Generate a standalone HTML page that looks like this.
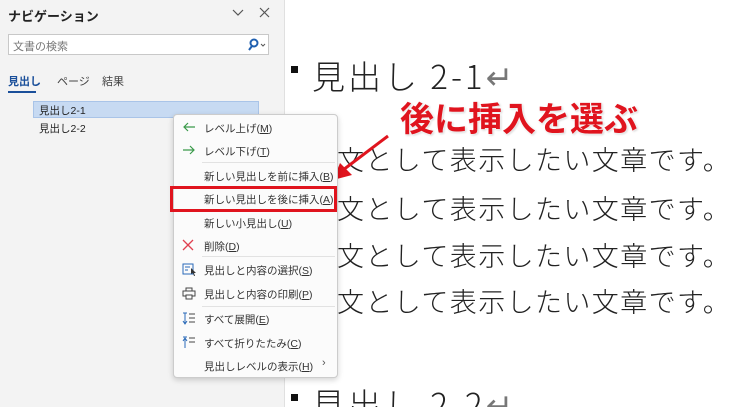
<!DOCTYPE html>
<html><head><meta charset="utf-8"><style>
*{margin:0;padding:0;box-sizing:border-box}
html,body{width:740px;height:407px;overflow:hidden}
body{background:#fff;position:relative;font-family:"Liberation Sans","Noto Sans CJK JP",sans-serif;color:#222}
.nav{position:absolute;left:0;top:0;width:285px;height:407px;background:#f3f3f3;border-right:1px solid #e0e0e0}
.a{position:absolute;white-space:nowrap}
.doc{font-family:"Noto Sans CJK JP",sans-serif;font-weight:300;font-size:27px;color:#222;letter-spacing:1.4px}
.menu{position:absolute;left:173px;top:114px;width:165px;height:264px;background:#fbfbfb;border:1px solid #ccc;border-radius:4px;box-shadow:0 2px 6px rgba(0,0,0,.18);font-size:10.5px;color:#333}
.mi{position:absolute;left:30px;white-space:nowrap}
.sep{position:absolute;left:28px;right:2px;height:1px;background:#e2e2e2}
.ic{position:absolute;left:8px}
u{text-decoration:underline}
</style></head><body>
<div class="nav">
  <div class="a" style="left:8px;top:6px;font-size:13px;font-weight:bold">ナビゲーション</div>
  <svg class="a" style="left:232px;top:9px" width="12" height="8"><path d="M1 1l5 5 5-5" stroke="#555" fill="none" stroke-width="1.2"/></svg>
  <svg class="a" style="left:259px;top:7px" width="11" height="11"><path d="M1 1l9 9M10 1l-9 9" stroke="#555" stroke-width="1.2"/></svg>
  <div class="a" style="left:8px;top:34px;width:261px;height:21px;background:#fff;border:1px solid #c8c8c8"></div>
  <div class="a" style="left:13px;top:38px;font-size:11px;color:#777">文書の検索</div>
  <svg class="a" style="left:247px;top:38px" width="20" height="13"><circle cx="7" cy="5" r="3.5" stroke="#1f5fb0" stroke-width="2" fill="none"/><path d="M5 8l-3 4" stroke="#1f5fb0" stroke-width="2"/><path d="M14 6l2 2 2-2" stroke="#555" fill="none"/></svg>
  <div class="a" style="left:8px;top:73px;font-size:11px;font-weight:bold;color:#1a4f9a">見出し</div>
  <div class="a" style="left:8px;top:91px;width:28px;height:2px;background:#1a4f9a"></div>
  <div class="a" style="left:57px;top:73px;font-size:11px;color:#444">ページ</div>
  <div class="a" style="left:102px;top:73px;font-size:11px;color:#444">結果</div>
  <div class="a" style="left:33px;top:101px;width:226px;height:17px;background:#c7daf2;border:1px solid #a9c4e8"></div>
  <div class="a" style="left:39px;top:103px;font-size:10.5px">見出し2-1</div>
  <div class="a" style="left:39px;top:121px;font-size:10.5px">見出し2-2</div>
</div>
<div class="a" style="left:291px;top:66px;width:7px;height:7px;background:#111"></div>
<div class="a doc" style="left:312px;top:51px;font-size:33px;letter-spacing:3px">見出し 2-1<span style="color:#777">↵</span></div>
<div class="a doc" style="left:337px;top:139px">文として表示したい文章です。</div>
<div class="a doc" style="left:337px;top:188px">文として表示したい文章です。</div>
<div class="a doc" style="left:337px;top:235px">文として表示したい文章です。</div>
<div class="a doc" style="left:337px;top:281px">文として表示したい文章です。</div>
<div class="a" style="left:291px;top:394px;width:7px;height:7px;background:#111"></div>
<div class="a doc" style="left:312px;top:379px;font-size:33px;letter-spacing:3px">見出し 2-2<span style="color:#777">↵</span></div>
<div class="a" style="left:400px;top:92px;font-size:34px;font-weight:bold;color:#e0141e;text-shadow:0 0 2px #fff,0 0 3px #fff,1px 1px 2px #bbb">後に挿入を選ぶ</div>
<svg class="a" style="left:325px;top:128px" width="70" height="60"><path d="M63 8L18 42" stroke="#e0141e" stroke-width="3"/><path d="M8 52l7-17 12 12z" fill="#e0141e"/></svg>
<div class="menu">
  <svg class="ic" style="top:6px" width="14" height="12"><path d="M13 6H2M6 2L2 6l4 4" stroke="#3a9a4a" fill="none" stroke-width="1.2"/></svg>
  <div class="mi" style="top:6px">レベル上げ(<u>M</u>)</div>
  <svg class="ic" style="top:29px" width="14" height="12"><path d="M1 6h11M8 2l4 4-4 4" stroke="#3a9a4a" fill="none" stroke-width="1.2"/></svg>
  <div class="mi" style="top:29px">レベル下げ(<u>T</u>)</div>
  <div class="sep" style="top:47px"></div>
  <div class="mi" style="top:54px">新しい見出しを前に挿入(<u>B</u>)</div>
  <div class="mi" style="top:77px">新しい見出しを後に挿入(<u>A</u>)</div>
  <div class="mi" style="top:101px">新しい小見出し(<u>U</u>)</div>
  <svg class="ic" style="top:124px" width="12" height="12"><path d="M1 1l10 10M11 1L1 11" stroke="#e04050" stroke-width="1.3"/></svg>
  <div class="mi" style="top:124px">削除(<u>D</u>)</div>
  <div class="sep" style="top:141px"></div>
  <svg class="ic" style="top:148px" width="16" height="13"><rect x="1" y="1" width="10" height="10" fill="none" stroke="#2a6ab8"/><path d="M3 4h5M3 7h3" stroke="#2a6ab8"/><path d="M9 5l5 5-2 0 1 3-1 0-1-3-2 1z" fill="#333"/></svg>
  <div class="mi" style="top:148px">見出しと内容の選択(<u>S</u>)</div>
  <svg class="ic" style="top:172px" width="14" height="13"><rect x="4" y="1" width="6" height="3" fill="none" stroke="#444"/><rect x="1" y="4" width="12" height="5" fill="none" stroke="#444"/><rect x="4" y="8" width="6" height="4" fill="#fbfbfb" stroke="#444"/></svg>
  <div class="mi" style="top:172px">見出しと内容の印刷(<u>P</u>)</div>
  <div class="sep" style="top:191px"></div>
  <svg class="ic" style="top:197px" width="14" height="13"><path d="M1 1h4M3 1v10M1 9l2 3 2-3" stroke="#2a6ab8" fill="none"/><path d="M7 2h6M7 6h6M7 10h6" stroke="#444"/></svg>
  <div class="mi" style="top:197px">すべて展開(<u>E</u>)</div>
  <svg class="ic" style="top:221px" width="14" height="13"><path d="M1 1h4M3 3v9M1 5l2-3 2 3" stroke="#2a6ab8" fill="none"/><path d="M7 2h6M7 6h6" stroke="#444"/></svg>
  <div class="mi" style="top:221px">すべて折りたたみ(<u>C</u>)</div>
  <div class="mi" style="top:244px">見出しレベルの表示(<u>H</u>)</div>
  <div class="a" style="left:148px;top:242px;font-size:11px;color:#555">›</div>
</div>
<div class="a" style="left:170px;top:186px;width:167px;height:26px;border:3px solid #e0141e"></div>
</body></html>
